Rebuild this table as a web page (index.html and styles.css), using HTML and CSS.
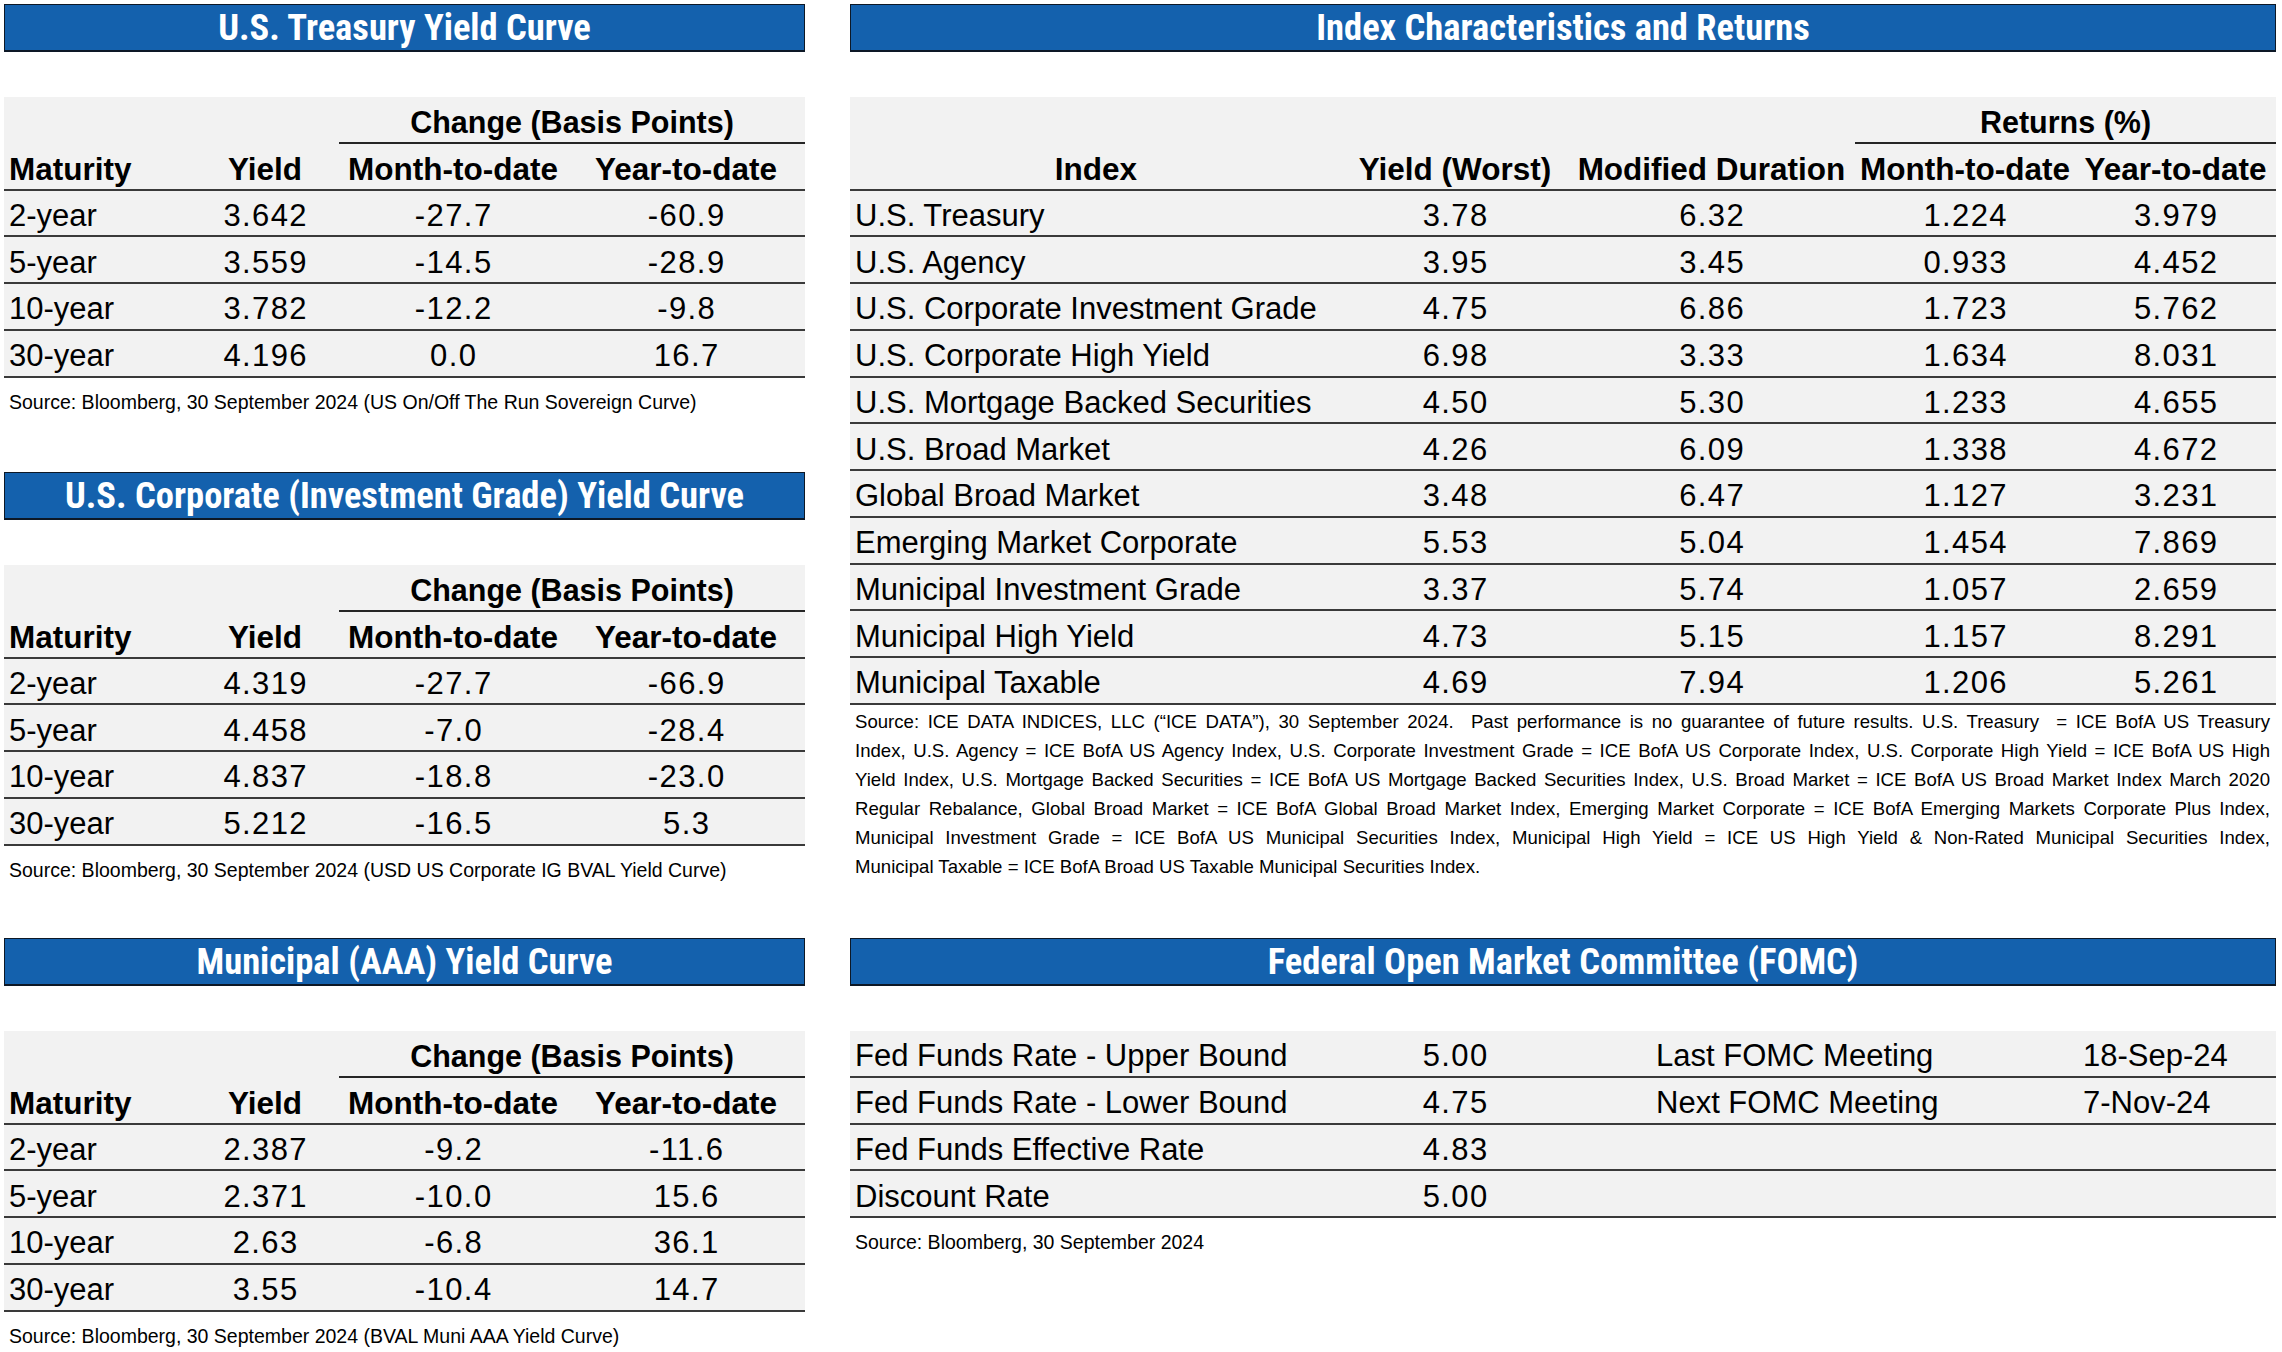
FILE: index.html
```html
<!DOCTYPE html>
<html lang="en">
<head>
<meta charset="utf-8">
<title>Fixed Income Market Data</title>
<link rel="stylesheet" href="styles.css">
</head>
<body>
<main class="page">

  <!-- U.S. Treasury -->
  <section class="panel left row1">
    <h2 class="title">U.S. Treasury Yield Curve</h2>
    <div class="tbl ytbl">
      <div class="tr hdr1"><div class="span2 under">Change (Basis Points)</div></div>
      <div class="tr hdr2"><div class="l">Maturity</div><div>Yield</div><div>Month-to-date</div><div>Year-to-date</div></div>
      <div class="tr"><div class="l">2-year</div><div class="n">3.642</div><div class="n">-27.7</div><div class="n">-60.9</div></div>
      <div class="tr"><div class="l">5-year</div><div class="n">3.559</div><div class="n">-14.5</div><div class="n">-28.9</div></div>
      <div class="tr"><div class="l">10-year</div><div class="n">3.782</div><div class="n">-12.2</div><div class="n">-9.8</div></div>
      <div class="tr"><div class="l">30-year</div><div class="n">4.196</div><div class="n">0.0</div><div class="n">16.7</div></div>
    </div>
    <p class="src">Source: Bloomberg, 30 September 2024 (US On/Off The Run Sovereign Curve)</p>
  </section>

  <!-- Index Characteristics -->
  <section class="panel right rowspan">
    <h2 class="title">Index Characteristics and Returns</h2>
    <div class="tbl itbl">
      <div class="tr hdr1"><div class="span2 under">Returns (%)</div></div>
      <div class="tr hdr2"><div>Index</div><div>Yield (Worst)</div><div>Modified Duration</div><div>Month-to-date</div><div>Year-to-date</div></div>
      <div class="tr"><div class="l">U.S. Treasury</div><div class="n">3.78</div><div class="n">6.32</div><div class="n">1.224</div><div class="n">3.979</div></div>
      <div class="tr"><div class="l">U.S. Agency</div><div class="n">3.95</div><div class="n">3.45</div><div class="n">0.933</div><div class="n">4.452</div></div>
      <div class="tr"><div class="l">U.S. Corporate Investment Grade</div><div class="n">4.75</div><div class="n">6.86</div><div class="n">1.723</div><div class="n">5.762</div></div>
      <div class="tr"><div class="l">U.S. Corporate High Yield</div><div class="n">6.98</div><div class="n">3.33</div><div class="n">1.634</div><div class="n">8.031</div></div>
      <div class="tr"><div class="l">U.S. Mortgage Backed Securities</div><div class="n">4.50</div><div class="n">5.30</div><div class="n">1.233</div><div class="n">4.655</div></div>
      <div class="tr"><div class="l">U.S. Broad Market</div><div class="n">4.26</div><div class="n">6.09</div><div class="n">1.338</div><div class="n">4.672</div></div>
      <div class="tr"><div class="l">Global Broad Market</div><div class="n">3.48</div><div class="n">6.47</div><div class="n">1.127</div><div class="n">3.231</div></div>
      <div class="tr"><div class="l">Emerging Market Corporate</div><div class="n">5.53</div><div class="n">5.04</div><div class="n">1.454</div><div class="n">7.869</div></div>
      <div class="tr"><div class="l">Municipal Investment Grade</div><div class="n">3.37</div><div class="n">5.74</div><div class="n">1.057</div><div class="n">2.659</div></div>
      <div class="tr"><div class="l">Municipal High Yield</div><div class="n">4.73</div><div class="n">5.15</div><div class="n">1.157</div><div class="n">8.291</div></div>
      <div class="tr"><div class="l">Municipal Taxable</div><div class="n">4.69</div><div class="n">7.94</div><div class="n">1.206</div><div class="n">5.261</div></div>
    </div>
    <div class="note">
      <span class="ln">Source: ICE DATA INDICES, LLC (“ICE DATA”), 30 September 2024.&nbsp; Past performance is no guarantee of future results. U.S. Treasury&nbsp; = ICE BofA US Treasury</span>
      <span class="ln">Index, U.S. Agency = ICE BofA US Agency Index, U.S. Corporate Investment Grade = ICE BofA US Corporate Index, U.S. Corporate High Yield = ICE BofA US High</span>
      <span class="ln">Yield Index, U.S. Mortgage Backed Securities = ICE BofA US Mortgage Backed Securities Index, U.S. Broad Market = ICE BofA US Broad Market Index March 2020</span>
      <span class="ln">Regular Rebalance, Global Broad Market = ICE BofA Global Broad Market Index, Emerging Market Corporate = ICE BofA Emerging Markets Corporate Plus Index,</span>
      <span class="ln">Municipal Investment Grade = ICE BofA US Municipal Securities Index, Municipal High Yield = ICE US High Yield &amp; Non-Rated Municipal Securities Index,</span>
      <span class="ln last">Municipal Taxable = ICE BofA Broad US Taxable Municipal Securities Index.</span>
    </div>
  </section>

  <!-- U.S. Corporate -->
  <section class="panel left row2">
    <h2 class="title">U.S. Corporate (Investment Grade) Yield Curve</h2>
    <div class="tbl ytbl">
      <div class="tr hdr1"><div class="span2 under">Change (Basis Points)</div></div>
      <div class="tr hdr2"><div class="l">Maturity</div><div>Yield</div><div>Month-to-date</div><div>Year-to-date</div></div>
      <div class="tr"><div class="l">2-year</div><div class="n">4.319</div><div class="n">-27.7</div><div class="n">-66.9</div></div>
      <div class="tr"><div class="l">5-year</div><div class="n">4.458</div><div class="n">-7.0</div><div class="n">-28.4</div></div>
      <div class="tr"><div class="l">10-year</div><div class="n">4.837</div><div class="n">-18.8</div><div class="n">-23.0</div></div>
      <div class="tr"><div class="l">30-year</div><div class="n">5.212</div><div class="n">-16.5</div><div class="n">5.3</div></div>
    </div>
    <p class="src">Source: Bloomberg, 30 September 2024 (USD US Corporate IG BVAL Yield Curve)</p>
  </section>

  <!-- Municipal -->
  <section class="panel left row3">
    <h2 class="title">Municipal (AAA) Yield Curve</h2>
    <div class="tbl ytbl">
      <div class="tr hdr1"><div class="span2 under">Change (Basis Points)</div></div>
      <div class="tr hdr2"><div class="l">Maturity</div><div>Yield</div><div>Month-to-date</div><div>Year-to-date</div></div>
      <div class="tr"><div class="l">2-year</div><div class="n">2.387</div><div class="n">-9.2</div><div class="n">-11.6</div></div>
      <div class="tr"><div class="l">5-year</div><div class="n">2.371</div><div class="n">-10.0</div><div class="n">15.6</div></div>
      <div class="tr"><div class="l">10-year</div><div class="n">2.63</div><div class="n">-6.8</div><div class="n">36.1</div></div>
      <div class="tr"><div class="l">30-year</div><div class="n">3.55</div><div class="n">-10.4</div><div class="n">14.7</div></div>
    </div>
    <p class="src">Source: Bloomberg, 30 September 2024 (BVAL Muni AAA Yield Curve)</p>
  </section>

  <!-- FOMC -->
  <section class="panel right row3">
    <h2 class="title">Federal Open Market Committee (FOMC)</h2>
    <div class="tbl ftbl">
      <div class="tr"><div class="l">Fed Funds Rate - Upper Bound</div><div class="n">5.00</div><div class="l ind">Last FOMC Meeting</div><div class="l">18-Sep-24</div></div>
      <div class="tr"><div class="l">Fed Funds Rate - Lower Bound</div><div class="n">4.75</div><div class="l ind">Next FOMC Meeting</div><div class="l">7-Nov-24</div></div>
      <div class="tr"><div class="l">Fed Funds Effective Rate</div><div class="n">4.83</div><div></div><div></div></div>
      <div class="tr"><div class="l">Discount Rate</div><div class="n">5.00</div><div></div><div></div></div>
    </div>
    <p class="src">Source: Bloomberg, 30 September 2024</p>
  </section>

</main>
</body>
</html>
```
FILE: styles.css
```css
html, body {
  margin: 0;
  padding: 0;
  background: #ffffff;
}
body {
  font-family: "Liberation Sans", Arial, sans-serif;
  color: #000;
}
.page {
  display: grid;
  grid-template-columns: 801px 1426px;
  grid-template-rows: 468px 466px auto;
  column-gap: 45px;
  padding: 4px 0 0 4px;
}
.left { grid-column: 1; }
.right { grid-column: 2; }
.row1 { grid-row: 1; }
.row2 { grid-row: 2; }
.row3 { grid-row: 3; }
.rowspan { grid-row: 1 / span 2; }

.title {
  margin: 0;
  height: 48px;
  box-sizing: border-box;
  padding-top: 2px;
  background: #1461ad;
  border: 1.5px solid #0d1826;
  border-bottom-width: 2px;
  color: #fff;
  font-family: "Roboto Condensed", "Liberation Sans", sans-serif;
  font-weight: 700;
  font-size: 36.5px;
  line-height: 42px;
  text-align: center;
}

.tbl {
  margin-top: 45px;
  background: #f2f2f2;
}
.tr {
  display: grid;
  height: 46.75px;
  box-sizing: border-box;
  padding-top: 6px;
  border-bottom: 2px solid #3a3a3a;
  align-items: center;
  font-size: 31px;
}
.tr > div {
  text-align: center;
  white-space: nowrap;
}
.tr > .l {
  text-align: left;
  padding-left: 5px;
}
.tr > .n {
  letter-spacing: 1.4px;
  text-indent: 1.4px;
}
.hdr1, .hdr2 {
  font-weight: 700;
  font-size: 31.5px;
}
.hdr1 {
  font-size: 30.5px;
  border-bottom: none;
  align-items: stretch;
}
.hdr1 .span2 {
  grid-column: -3 / -1;
  display: flex;
  align-items: center;
  justify-content: center;
}
.under {
  border-bottom: 2px solid #262626;
}

.ytbl .tr { grid-template-columns: 187px 148px 228px 238px; }
.itbl .tr { grid-template-columns: 492px 226px 287px 220px 201px; }
.ftbl .tr { grid-template-columns: 492px 226px 510px 198px; }
.ftbl .ind { padding-left: 88px; }

.src {
  margin: 9px 0 0 0;
  padding-left: 5px;
  font-size: 19.5px;
  line-height: 30px;
}
.note {
  margin-top: 2px;
  padding: 0 6px 0 5px;
  font-size: 18.6px;
  line-height: 29px;
}
.ln {
  display: block;
  white-space: nowrap;
  text-align: justify;
  text-align-last: justify;
}
.ln.last {
  text-align: left;
  text-align-last: left;
}
```
